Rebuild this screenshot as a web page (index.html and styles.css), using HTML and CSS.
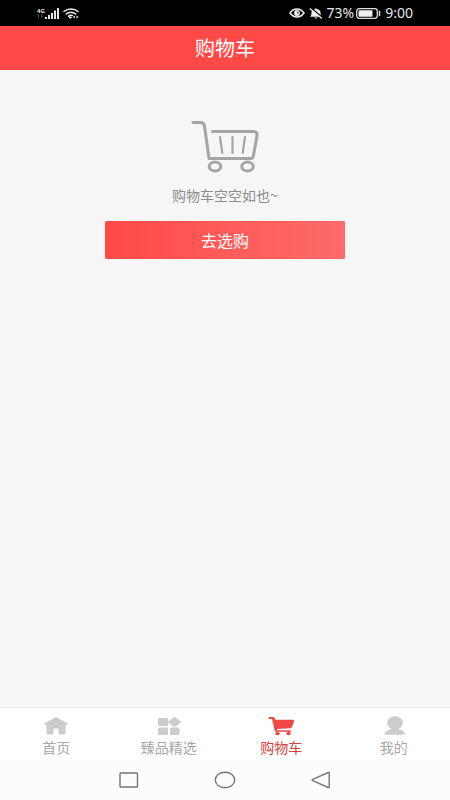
FILE: index.html
```html
<!DOCTYPE html>
<html lang="zh-CN">
<head>
<meta charset="utf-8">
<meta name="viewport" content="width=device-width, initial-scale=1">
<title>购物车</title>
<link rel="stylesheet" href="styles.css">
</head>
<body>
<div class="app">
  <div class="status">
    <div class="status-group">
      <div class="network"><span>4G</span><svg width="6" height="4" viewBox="0 0 6 4" fill="none" stroke="#666" stroke-width=".8" aria-hidden="true"><path d="M1.500 4V.5L.5 1.500M4.500 0v3.500l1-1"/></svg></div>
      <svg width="14" height="11" viewBox="0 0 14 11" fill="#e4e4e4" aria-hidden="true"><path d="M0 9h2v2H0zM3 7h2v4H3zM6 5h2v6H6zM9 2.500h2V11H9zM12 0h2v11h-2z"/></svg>
      <svg class="wifi" width="16" height="11" viewBox="0 0 16 11" fill="none" stroke="#eee" stroke-width="1.500" stroke-linecap="round" aria-hidden="true"><path d="M1 3.500C5 0 11 0 15 3.500M3.300 6c2.700-2.400 6.700-2.400 9.400 0M5.600 8.200c1.200-1 2.400-1.200 3.700-.8"/><path d="M6.500 9h2L7.500 10.200z" fill="#eee" stroke-width="1"/><path d="M9.800 9l2-1.500v3zM15.500 9l-2-1.500v3z" fill="#eee" stroke="none"/></svg>
    </div>
    <div class="status-group">
      <svg width="16" height="10" viewBox="0 0 16 10" fill="none" stroke="#eee" stroke-width="1.500" aria-hidden="true"><path d="M1 5c3.600-5.200 10.400-5.200 14 0-3.600 5.200-10.400 5.200-14 0z"/><circle cx="8" cy="5" r="2.900" fill="#eee" stroke="none"/><path d="M8.500 3.500v1.500H10" stroke="#222" stroke-width=".8"/></svg>
      <svg class="bell" width="14" height="11" viewBox="0 0 14 11" fill="#eee" aria-hidden="true"><path d="M1 8.700C2.500 7.500 2.300 6 2.500 4c.3-1.800 2-2.600 3.500-2.800.3-1.400 1.700-1.400 2 0 1.500.2 3.200 1 3.500 2.800.2 2 0 3.500 1.500 4.700zM5.500 9.500h3c-.4 1.500-2.600 1.500-3 0z"/><path d="M2.200 0l12 10" stroke="#000" stroke-width="1.200"/><path d="M.8.500l12 10" stroke="#eee" stroke-width="1.300"/></svg>
      <span>73%</span>
      <svg class="battery" width="25" height="11" viewBox="0 0 25 11" aria-hidden="true"><rect x=".7" y=".7" width="20.600" height="9.600" rx="2.500" fill="none" stroke="#ddd" stroke-width="1.300"/><rect x="2.500" y="2.300" width="14" height="6.400" rx=".8" fill="#eee"/><path d="M23.500 3.500v4" stroke="#ddd" stroke-width="1.500" stroke-linecap="round"/></svg>
      <span class="time">9:00</span>
    </div>
  </div>
  <header class="header"><h1>购物车</h1></header>
  <main class="main">
    <svg width="68" height="54" viewBox="0 0 68 54" fill="none" stroke="#a5a5a5" stroke-width="3" stroke-linecap="round" stroke-linejoin="round" aria-hidden="true"><path d="M2 2.500h7c2.700 0 4 1 4.500 3.500L18 38.500h41.500c1.800 0 2.500-.6 2.800-2.200L66 16c.5-3-1-4.500-4-4.500H21.500"/><path d="M29 17l2.300 16M41.500 17v16M54 17l-2.300 16" stroke-width="2.200"/><ellipse cx="24" cy="46.500" rx="5.800" ry="4.500" stroke-width="3"/><ellipse cx="56.500" cy="46.500" rx="5.800" ry="4.500" stroke-width="3"/></svg>
    <p class="message">购物车空空如也~</p>
    <button class="shop" type="button">去选购</button>
  </main>
  <nav class="tabs">
    <a class="tab" href="#home">
      <svg width="24" height="20" viewBox="0 0 24 20" aria-hidden="true"><path fill="currentColor" d="M11 1.400q1-.6 2 0l10.500 6.200q.6 1-.5 1.200h-1.500V17q0 1.500-1.800 1.500H14.500V14q0-1.500-1.500-1.500h-2Q9.500 12.500 9.500 14v4.500H4.300q-1.800 0-1.800-1.500V8.800H1q-1.100-.2-.5-1.200z"/></svg>
      <span>首页</span>
    </a>
    <a class="tab" href="#select">
      <svg width="24" height="20" viewBox="0 0 24 20" fill="currentColor" aria-hidden="true"><rect x="1" y="2" width="10" height="8" rx="1.500"/><path d="M16.500 1.400q1-.9 2 0l5 3.900q.9.700 0 1.400l-5 3.900q-1 .8-2 0l-5-3.900q-.9-.7 0-1.400z"/><rect x="1" y="11.500" width="10" height="7.500" rx="1.500"/><rect x="13" y="11.500" width="9.500" height="7.500" rx="1.500"/></svg>
      <span>臻品精选</span>
    </a>
    <a class="tab active" href="#cart" aria-current="page">
      <svg width="26" height="20" viewBox="0 0 26 20" aria-hidden="true"><path fill="currentColor" d="M1.500 1h3.500q1.400 0 1.800 1.200l.5 1.600h18q1.200 0 .9 1.200L24 11q-.3 1-1.600 1.200L8.700 13l.5 1.300h14v1.500H7.800q-.8 0-1-.8L4 3H1.500Q.5 2.800.5 2t1-1z"/><ellipse cx="9.500" cy="17.500" rx="2.200" ry="1.800" fill="currentColor"/><ellipse cx="20.500" cy="17.500" rx="2.200" ry="1.800" fill="currentColor"/></svg>
      <span>购物车</span>
    </a>
    <a class="tab" href="#mine">
      <svg width="24" height="20" viewBox="0 0 24 20" fill="currentColor" aria-hidden="true"><ellipse cx="13" cy="6.800" rx="8" ry="6.500"/><path d="M8 10h10l-1.500 3c3.500.8 5.500 2.500 6.700 5q.3.800-.8.800H3.200q-1 0-.8-.8c1.200-2.500 3.600-4.200 7.100-5z"/></svg>
      <span>我的</span>
    </a>
  </nav>
  <div class="system">
    <button type="button" aria-label="最近任务"><svg width="20" height="18" viewBox="0 0 20 18" aria-hidden="true"><rect x="1" y="2" width="17.500" height="14" rx=".8"/></svg></button>
    <button type="button" aria-label="主屏幕"><svg width="22" height="18" viewBox="0 0 22 18" aria-hidden="true"><ellipse cx="11" cy="9" rx="9.700" ry="7.800"/></svg></button>
    <button type="button" aria-label="返回"><svg width="20" height="18" viewBox="0 0 20 18" aria-hidden="true"><path d="M17.200 1.500q1-.4 1 .6v13.800q0 1-1 .6L1.700 9.600q-1-.6 0-1.200z"/></svg></button>
  </div>
</div>
</body>
</html>
```

FILE: styles.css
```css
* {
  box-sizing: border-box;
}

body {
  margin: 0;
  font-family: "Noto Sans", "Noto Sans CJK SC", sans-serif;
  background: #f6f6f6;
}

.app {
  display: flex;
  flex-direction: column;
  min-height: 100vh;
}

svg {
  display: block;
}

.status {
  display: flex;
  justify-content: space-between;
  align-items: center;
  height: 26px;
  padding: 0 37px;
  background: #000;
  color: #e8e8e8;
  font-size: 14px;
  line-height: 20px;
}

.status-group {
  display: flex;
  align-items: center;
}

.network {
  display: flex;
  flex-direction: column;
  width: 8px;
  font-size: 6px;
  font-weight: 700;
  line-height: 6px;
}

.wifi,
.bell {
  margin: 0 4px;
}

.battery {
  margin: 0 4px 0 2px;
}

.header {
  display: flex;
  justify-content: center;
  align-items: center;
  height: 44px;
  background: #ff4a48;
  color: #fff;
}

.header h1 {
  margin: 0;
  font-family: "Noto Sans CJK SC", sans-serif;
  font-size: 20px;
  font-weight: 400;
  line-height: 28px;
}

.main {
  display: flex;
  flex: 1;
  flex-direction: column;
  align-items: center;
  padding: 50px 20px;
}

.message {
  margin: 11px 0 16px;
  color: #8c8c8c;
  font-family: "Noto Sans CJK SC", sans-serif;
  font-size: 14px;
  line-height: 20px;
}

.shop {
  width: 240px;
  height: 38px;
  padding: 0;
  border: 0;
  border-radius: 2px;
  background: linear-gradient(90deg, #ff4a48, #fd6b6a);
  box-shadow: inset 0 0 1px #c54846;
  color: #fff;
  font-family: "Noto Sans CJK SC", sans-serif;
  font-size: 16px;
  line-height: 24px;
}

.tabs {
  display: grid;
  grid-template-columns: repeat(4, 1fr);
  height: 53px;
  border-top: 1px solid #ebebeb;
  background: #fff;
}

.tab {
  display: flex;
  flex-direction: column;
  align-items: center;
  padding-top: 8px;
  color: #ccc;
  font-family: "Noto Sans CJK SC", sans-serif;
  font-size: 14px;
  line-height: 22px;
  text-decoration: none;
}

.tab span {
  color: #a8a8a8;
}

.tab.active {
  color: #f04846;
}

.tab.active span {
  color: #d5403e;
}

.system {
  display: flex;
  justify-content: center;
  align-items: center;
  gap: 52px;
  height: 40px;
  background: #fcfcfc;
}

.system button {
  display: flex;
  justify-content: center;
  width: 44px;
  padding: 0;
  border: 0;
  background: none;
}

.system svg {
  fill: none;
  stroke: #777;
  stroke-width: 1.4px;
}
```
